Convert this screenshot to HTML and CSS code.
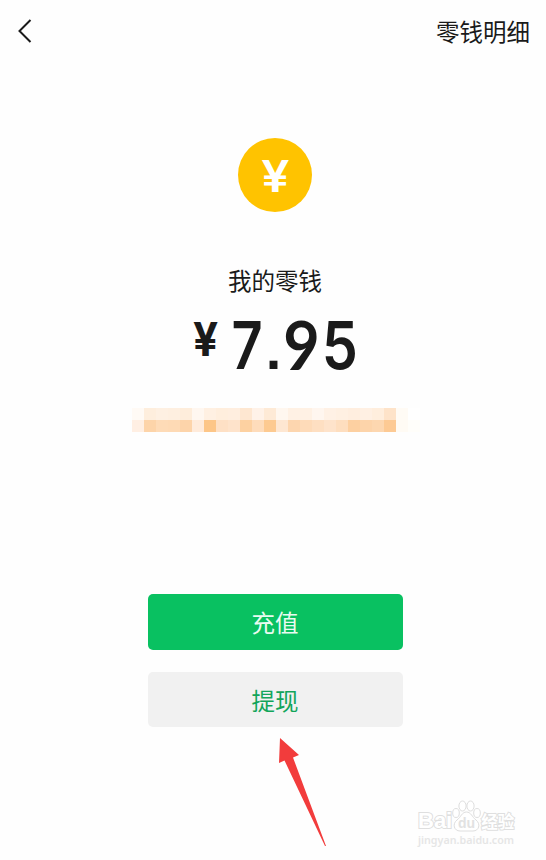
FILE: index.html
```
<!DOCTYPE html>
<html lang="zh-CN">
<head>
  <meta charset="UTF-8">
  <meta name="viewport" content="width=device-width, initial-scale=1.0">
  <title>我的零钱</title>
  <link rel="stylesheet" href="styles.css">
</head>
<body>
  <header class="topbar">
    <svg class="back" width="16" height="26" viewBox="0 0 16 26">
      <path d="M13.5 2 L2.5 13 L13.5 24"/>
    </svg>
    <span class="detail">零钱明细</span>
  </header>

  <main class="wallet">
    <div class="coin"><span>¥</span></div>
    <h1 class="title">我的零钱</h1>
    <div class="amount">
      <span class="yen">¥</span>
      <span class="number"><span class="seven">7</span><span class="dot">.</span><span class="nine">9</span><span class="five">5</span></span>
    </div>

    <div class="mosaic" id="mosaic"></div>

    <div class="buttons">
      <button class="btn btn-green">充值</button>
      <button class="btn btn-gray">提现</button>
    </div>
  </main>

  <!-- Arrow pointing at the second button -->
  <svg class="arrow" width="60" height="116" viewBox="0 0 60 116">
    <path d="M10 3 L29 20 L23 22.5 L56 111 L55 111 L14.5 25.5 L9 28 Z"/>
  </svg>

  <div class="watermark">
    <div class="brand">
      <span class="bai">Bai</span>
      <svg width="29" height="33" viewBox="0 0 29 33">
        <ellipse cx="4" cy="13" rx="3.3" ry="4.5"/>
        <ellipse cx="10.5" cy="6" rx="3.6" ry="5"/>
        <ellipse cx="18.5" cy="6" rx="3.6" ry="5"/>
        <ellipse cx="25" cy="13" rx="3.3" ry="4.5"/>
        <path d="M14.5 12 C10 12 9 17 5 20 C0 24 2 31 8 31 H21 C27 31 29 24 24 20 C20 17 19 12 14.5 12 Z"/>
        <text x="14.5" y="28" text-anchor="middle">du</text>
      </svg>
      <span class="cn">经验</span>
    </div>
    <div class="site">jingyan.baidu.com</div>
  </div>

  <script>
    // Blurred out line, two rows of blocks
    const rows = [
      ['#fffaf5', '#feeedd', '#fef0e2', '#feefe0', '#feeddb', '#fff7f0', '#fff0e2', '#ffeedd', '#ffeedf', '#fee7d1', '#fff2e8', '#feead6',
       '#fff7ef', '#fff1e4', '#fff1e4', '#fff6ef', '#fff1e5', '#fff0e2', '#ffeedf', '#fff0e3', '#ffeedd', '#fee3c9', '#fffbf5', '#ffffff'],
      ['#ffefe3', '#fdd4a9', '#fedbb7', '#fedab5', '#fdd4aa', '#ffebdb', '#fdc688', '#fee0c5', '#fee3cb', '#fdd1a1', '#fedcbb', '#fdca91',
       '#fee7d2', '#fdd6af', '#fedbb9', '#fedfc2', '#fee3cb', '#fedebf', '#fdd0a1', '#fdd4aa', '#fdd7b0', '#fdca94', '#fffbf4', '#fffefa']
    ];
    const mosaic = document.getElementById('mosaic');
    rows.flat().forEach((color) => {
      const block = document.createElement('i');
      block.style.background = color;
      mosaic.appendChild(block);
    });
  </script>
</body>
</html>
```
FILE: styles.css
```
* {
  box-sizing: border-box;
}

body {
  margin: 0;
  height: 860px;
  position: relative;
  overflow: hidden;
  background: #fefefe;
  color: #1a1a1a;
  font-family: 'Noto Sans CJK SC', sans-serif;
}

.topbar {
  height: 62px;
  padding: 0 16px 0 17px;
  display: flex;
  justify-content: space-between;
  align-items: center;
}

.back path {
  fill: none;
  stroke: #1a1a1a;
  stroke-width: 2;
}

.detail {
  font-size: 23.5px;
}

.wallet {
  display: flex;
  flex-direction: column;
  align-items: center;
  padding: 76px 0 0 4px;
}

.coin {
  width: 74px;
  height: 74px;
  border-radius: 50%;
  background: #ffc300;
  color: #fff;
  display: flex;
  justify-content: center;
  align-items: center;
  font-family: Inter, sans-serif;
  font-size: 44px;
  font-weight: 600;
  line-height: 1;
}

.coin span {
  transform: translateY(1px) scaleX(1.14);
}

.title {
  margin: 50px 0 0;
  font-size: 23.5px;
  font-weight: 400;
  line-height: 36px;
}

.amount {
  height: 72px;
  width: 168px;
  margin-top: 11px;
  display: flex;
  align-items: flex-start;
  font-weight: 700;
  font-family: Inter, sans-serif;
}

.yen {
  flex: none;
  width: 29px;
  display: flex;
  justify-content: center;
  font-size: 46px;
  line-height: 60px;
  transform: scaleX(0.96);
}

.number {
  flex: none;
  display: grid;
  grid-template-columns: 36px 17px 39px 37px;
  justify-items: center;
  margin-left: 9px;
  font-size: 66px;
  font-weight: 600;
  line-height: 72px;
}

.number span {
  display: block;
}

.seven {
  transform: scaleX(0.82);
}

.dot {
  font-family: 'Liberation Sans', sans-serif;
  font-size: 56px;
  font-weight: 700;
  line-height: 82px;
  height: 72px;
}

.nine {
  font-family: Lato, sans-serif;
  font-size: 67px;
  font-weight: 700;
  line-height: 70px;
  transform: scaleX(0.94);
}

.five {
  line-height: 72px;
  transform: scaleX(0.87);
}

.mosaic {
  display: grid;
  grid-template-columns: repeat(24, 12px);
  grid-auto-rows: 12px;
  margin: 27px 0 0 1px;
}

.buttons {
  display: flex;
  flex-direction: column;
  gap: 22px;
  margin-top: 162px;
}

.btn {
  width: 255px;
  height: 56px;
  padding: 0;
  border: none;
  border-radius: 5px;
  font-family: inherit;
  font-size: 23.5px;
  line-height: 56px;
}

.btn-green {
  background: #09c161;
  color: #e9fbf1;
}

.btn-gray {
  height: 55px;
  line-height: 54px;
  background: #f1f1f1;
  color: #12a55a;
}

.arrow {
  position: absolute;
  left: 270px;
  top: 735px;
}

.arrow path {
  fill: #f23c3c;
}

.watermark {
  position: absolute;
  left: 418px;
  top: 800px;
  font-family: 'Liberation Sans', 'Noto Sans CJK SC', sans-serif;
  font-weight: 700;
  color: #fff;
}

.brand {
  display: flex;
  align-items: flex-end;
  height: 33px;
  font-size: 22px;
  line-height: 24px;
}

.bai,
.cn {
  -webkit-text-stroke: 2px #dfdfdf;
  paint-order: stroke fill;
}

.brand svg {
  fill: #fff;
  stroke: #dedede;
  flex: none;
}

.brand text {
  font-size: 14px;
  fill: #e2e2e2;
  stroke: none;
}

.cn {
  font-size: 16.5px;
  line-height: 22px;
}

.site {
  font-family: 'Noto Sans', sans-serif;
  font-size: 10.7px;
  font-weight: 600;
  line-height: 14px;
  color: #e6e6e6;
}
```
